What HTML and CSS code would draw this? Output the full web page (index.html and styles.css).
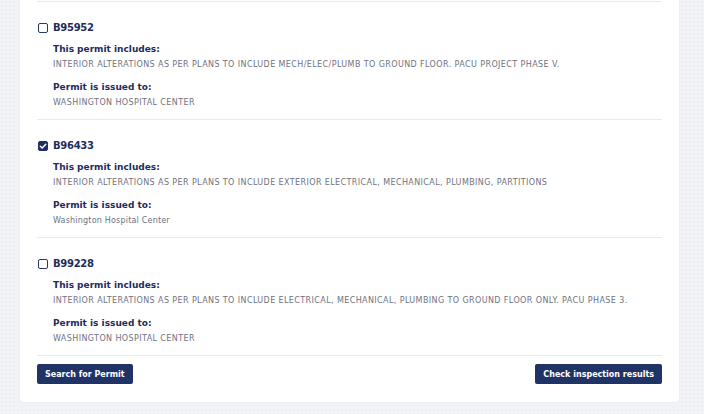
FILE: index.html
```html
<!DOCTYPE html>
<html lang="en">
<head>
<meta charset="utf-8">
<title>Permits</title>
<link rel="stylesheet" href="styles.css">
</head>
<body>
<div class="page">
  <div class="card">
    <div class="list">
      <div class="permit">
        <label class="head">
          <span class="box"></span>
          <span class="num">B95952</span>
        </label>
        <div class="label first">This permit includes:</div>
        <div class="value">INTERIOR ALTERATIONS AS PER PLANS TO INCLUDE MECH/ELEC/PLUMB TO GROUND FLOOR. PACU PROJECT PHASE V.</div>
        <div class="label">Permit is issued to:</div>
        <div class="value">WASHINGTON HOSPITAL CENTER</div>
      </div>
      <div class="permit">
        <label class="head">
          <span class="box checked"><svg viewBox="0 0 10 10" width="10" height="10"><path d="M2.3 5.2 L4.2 7 L7.8 3.2" fill="none" stroke="#fff" stroke-width="1.5" stroke-linecap="round" stroke-linejoin="round"/></svg></span>
          <span class="num">B96433</span>
        </label>
        <div class="label first">This permit includes:</div>
        <div class="value">INTERIOR ALTERATIONS AS PER PLANS TO INCLUDE EXTERIOR ELECTRICAL, MECHANICAL, PLUMBING, PARTITIONS</div>
        <div class="label">Permit is issued to:</div>
        <div class="value mixed">Washington Hospital Center</div>
      </div>
      <div class="permit">
        <label class="head">
          <span class="box"></span>
          <span class="num">B99228</span>
        </label>
        <div class="label first">This permit includes:</div>
        <div class="value">INTERIOR ALTERATIONS AS PER PLANS TO INCLUDE ELECTRICAL, MECHANICAL, PLUMBING TO GROUND FLOOR ONLY. PACU PHASE 3.</div>
        <div class="label">Permit is issued to:</div>
        <div class="value">WASHINGTON HOSPITAL CENTER</div>
      </div>
    </div>
    <div class="actions">
      <button class="btn">Search for Permit</button>
      <button class="btn">Check inspection results</button>
    </div>
  </div>
</div>
</body>
</html>
```

FILE: styles.css
```css
* { box-sizing: border-box; }
html, body { margin: 0; padding: 0; }
body {
  background-color: #f2f3f6;
  background-image: radial-gradient(#e9eaee 0.6px, transparent 0.8px);
  background-size: 4px 4px;
  font-family: "DejaVu Sans", sans-serif;
  color: #1f2c5b;
  height: 414px;
  overflow: hidden;
}
.page { padding: 0 25px 0 20px; }
.card {
  background: #fff;
  border-radius: 0 0 4px 4px;
  padding: 1px 17px 18px;
  box-shadow: 0 0 0 1px #eceef2;
}
.list { border-top: 1px solid #e9eaee; }
.permit {
  padding: 19px 0 11px;
  border-bottom: 1px solid #e9eaee;
}
.head {
  display: flex;
  align-items: center;
  gap: 5px;
  height: 14px;
}
.box {
  width: 10px;
  height: 10px;
  margin-left: 1px;
  border: 1.5px solid #2a3766;
  border-radius: 2px;
  display: flex;
  align-items: center;
  justify-content: center;
}
.box.checked { background: #1f2f63; border-color: #1f2f63; }
.box.checked svg { flex: none; }
.num {
  font-size: 10px;
  letter-spacing: -0.3px;
  font-weight: 700;
  line-height: 14px;
  color: #1f2c5b;
}
.label {
  margin: 11px 0 0 16px;
  font-size: 9px;
  line-height: 13px;
  font-weight: 700;
  color: #1f2c5b;
}
.label.first { margin-top: 8px; }
.value {
  margin: 4px 0 0 16px;
  font-size: 8px;
  letter-spacing: 0.4px;
  line-height: 10px;
  color: #6e7282;
}
.value.mixed { letter-spacing: 0.2px; }
.actions {
  display: flex;
  justify-content: space-between;
  margin-top: 8px;
}
.btn {
  height: 20px;
  padding: 0 8px;
  border: none;
  border-radius: 2px;
  background: #1f3366;
  color: #fff;
  font-family: "DejaVu Sans", sans-serif;
  font-size: 8px;
  font-weight: 700;
}
```
